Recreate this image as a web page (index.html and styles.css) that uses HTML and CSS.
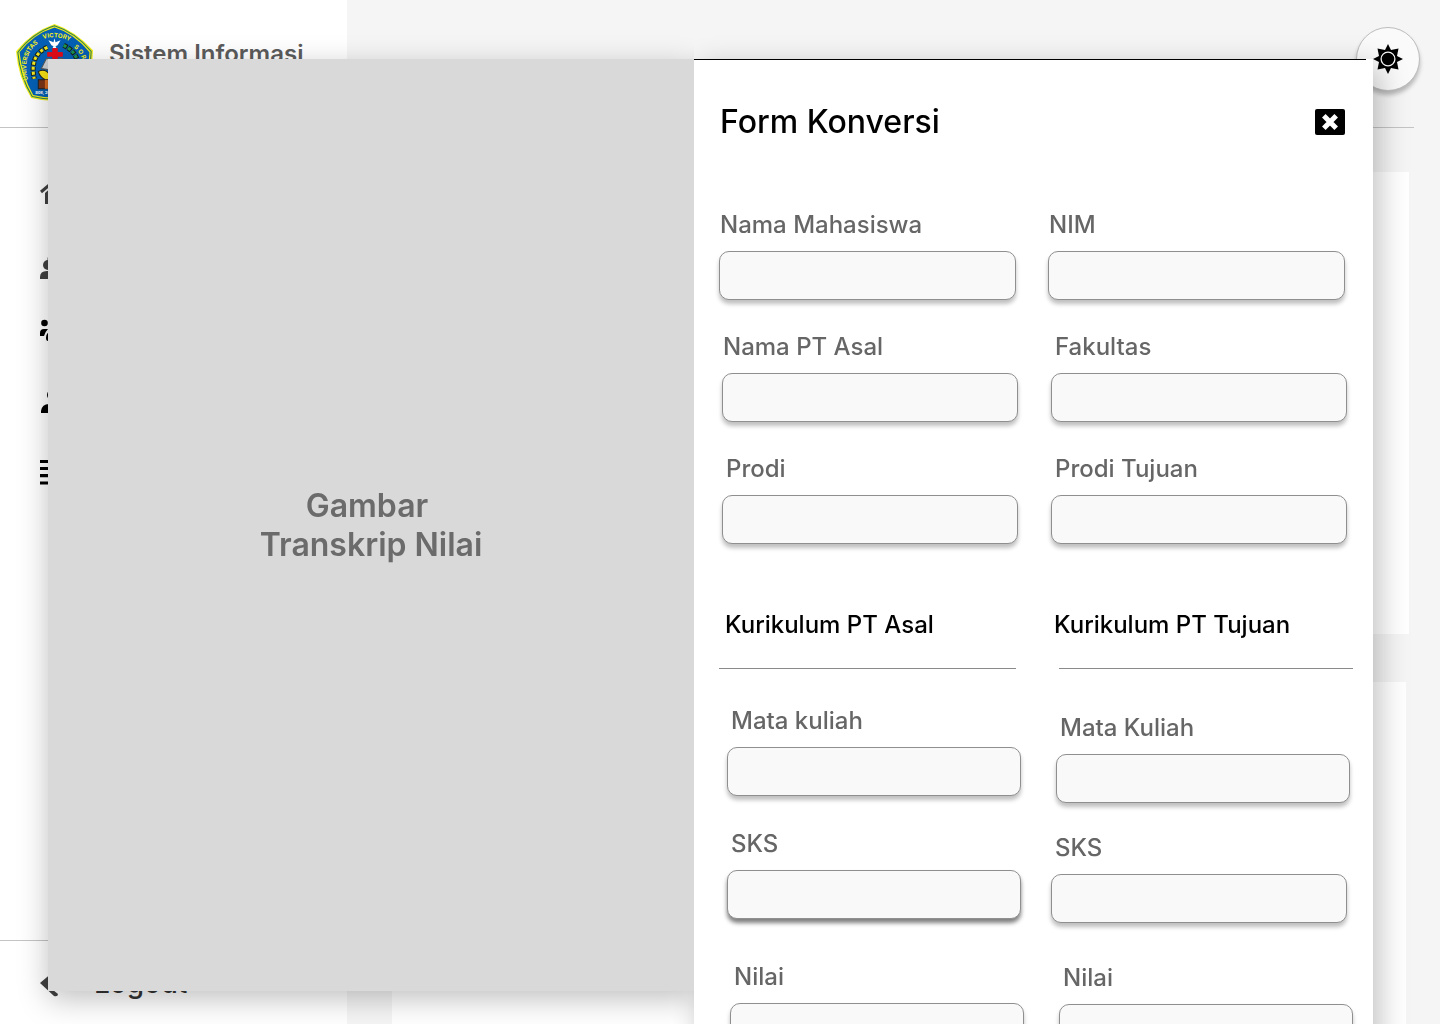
FILE: index.html
```html
<!DOCTYPE html>
<html lang="id">
<head>
<meta charset="utf-8">
<meta name="viewport" content="width=device-width, initial-scale=1">
<title>Form Konversi</title>
<link rel="stylesheet" href="styles.css">
</head>
<body>
<div class="app">
  <aside class="sidebar">
    <div class="brand">
      <svg class="logo" viewBox="0 0 76 76" aria-hidden="true">
        <defs>
          <path id="arc-left" d="M12 55 C7 38 12 24 25 17"/>
          <path id="arc-top" d="M27 15 Q39 10 56 18"/>
          <path id="arc-right" d="M57 23 Q64 28 67 40"/>
        </defs>
        <path d="M38 0 Q59 7 76 26 Q76 51 63 73 Q38 79 15 73 Q2 53 0 27 Q15 8 38 0Z" fill="#f4ee1c"/>
        <path d="M38 1.800 Q58 8 74.200 27 Q74 51 62 71.500 Q38 77 16 71.500 Q4 52 1.800 28 Q16 9 38 1.800Z" fill="none" stroke="#2c7d55" stroke-width="1"/>
        <path d="M38 3.500 Q57 9 72.500 28 Q72 50 61 70 Q38 75 17 70 Q6 51 3.500 28 Q17 10 38 3.500Z" fill="#0560b5"/>
        <g class="logo-text">
          <text><textPath href="#arc-left">UNIVERSITAS</textPath></text>
          <text><textPath href="#arc-top">VICTORY</textPath></text>
          <text><textPath href="#arc-right">S O R</textPath></text>
        </g>
        <g fill="none" stroke="#17251c" stroke-width="5" stroke-dasharray="4 1">
          <path d="M31 23 Q13 31 18 54"/>
          <path d="M47 21 Q59 27 61 38"/>
        </g>
        <path d="M31 23 Q13 31 18 54" fill="none" stroke="#f2e51f" stroke-width="3" stroke-dasharray="3 2"/>
        <path d="M47 21 Q59 27 61 38" fill="none" stroke="#1c9550" stroke-width="3" stroke-dasharray="3 2"/>
        <path d="M38 14l1 4 5-2-3 5-2 1 1 2h-4l1-2-2-1-3-5 5 2Z" fill="#fff"/>
        <path d="M36 24h5v4h5v4h-5v5h-5v-5h-5v-4h5Z" fill="#e00c18"/>
        <path d="M30 34l8 1 8-1 5 10-13 2-13-2Z" fill="#c9cdd0" stroke="#555"/>
        <path d="M36 24h5v4h5v4h-5v3h-5v-3h-5v-4h5Z" fill="#e00c18"/>
        <path d="M22 47q7-4 12 4l15-3v7H29q-5-2-7-8Z" fill="#f5df15" stroke="#222"/>
        <path d="M22 55h32v9H22Z" fill="#7c3516" stroke="#222"/>
        <path d="M30 55v9" stroke="#d86d23" stroke-width="3"/>
        <text class="logo-motto" x="19" y="69">Soe, 2017</text>
      </svg>
      <span class="brand-name">Sistem Informasi</span>
    </div>
    <nav class="nav" aria-label="Menu utama">
      <a href="#" aria-label="Beranda"><svg viewBox="0 0 40 40"><path d="M1 18L14 7l13 11" fill="none" stroke="#414141" stroke-width="3"/><path d="M5 19l9-8 9 8v11H5Z" fill="#414141"/></svg></a>
      <a href="#" aria-label="Pengguna"><svg viewBox="0 0 40 40" fill="#414141"><circle cx="8" cy="21" r="5"/><circle cx="12" cy="15" r="4.500"/><path d="M0 35v-2q0-6 7-6h9v8Z"/></svg></a>
      <a href="#" aria-label="Kelompok"><svg viewBox="0 0 40 40"><circle cx="4.500" cy="9" r="3.300"/><path d="M0 22v-3q0-4 4-4h4q-3 3-4 7Z"/><path d="M6 24q0-6 5-6h6v9H8q-2 0-2-3Z"/><circle cx="14" cy="12" r="4"/></svg></a>
      <a href="#" aria-label="Profil"><svg viewBox="0 0 40 40"><circle cx="13" cy="11" r="6"/><path d="M1 29v-2q1-7 8-7h8q8 0 8 7v2Z"/></svg></a>
      <a href="#" aria-label="Daftar"><svg viewBox="0 0 40 40"><path d="M0 7.500h26M0 14.500h26M0 21.700h26M0 29h26" stroke="#000" stroke-width="3.200"/></svg></a>
    </nav>
    <a class="logout" href="#">
      <svg viewBox="0 0 30 30" aria-hidden="true"><path d="M0 15L13 4v18l5 4q0 3-4 2Z" fill="#414141"/></svg>
      Logout
    </a>
  </aside>
  <main class="content">
    <header class="topbar">
      <button class="theme" type="button" aria-label="Mode terang">
        <svg viewBox="0 0 32 32" aria-hidden="true"><path d="M16 1l3 6 7.500-1.500L25 13l6 3-6 3 1.500 7.500L19 25l-3 6-3-6-7.500 1.500L7 19l-6-3 6-3-1.500-7.500L13 7Z"/><circle cx="16" cy="16" r="6.900" stroke="#fafafa" stroke-width="1.300"/></svg>
      </button>
    </header>
    <div class="cards">
      <section class="card"></section>
      <section class="card card-last"></section>
    </div>
  </main>
</div>

<div class="overlay">
  <div class="modal" role="dialog" aria-labelledby="form-title">
    <section class="preview">
      <p>Gambar&nbsp;<br>Transkrip Nilai</p>
    </section>
    <form class="panel">
      <header class="panel-head">
        <h1 id="form-title">Form Konversi</h1>
        <button class="close" type="button" aria-label="Tutup">
          <svg viewBox="0 0 16 16" aria-hidden="true"><path d="M2.500 2.500l11 11M13.500 2.500l-11 11" stroke="#fff" stroke-width="4.500"/></svg>
        </button>
      </header>
      <div class="columns">
        <div class="fields">
          <div class="field flush"><label for="nama">Nama Mahasiswa</label><input id="nama" type="text"></div>
          <div class="field step-1 flush"><label for="pt">Nama PT Asal</label><input id="pt" type="text"></div>
          <div class="field step-1"><label for="prodi">Prodi</label><input id="prodi" type="text"></div>
        </div>
        <div class="fields">
          <div class="field flush"><label for="nim">NIM</label><input id="nim" type="text"></div>
          <div class="field step-1"><label for="fakultas">Fakultas</label><input id="fakultas" type="text"></div>
          <div class="field step-1"><label for="tujuan">Prodi Tujuan</label><input id="tujuan" type="text"></div>
        </div>
      </div>
      <div class="columns curriculum">
        <section>
          <h2>Kurikulum PT Asal</h2>
          <hr>
          <div class="fields origin">
            <div class="field step-2"><label for="mk-asal">Mata kuliah</label><input id="mk-asal" type="text"></div>
            <div class="field step-2"><label for="sks-asal">SKS</label><input class="raised" id="sks-asal" type="text"></div>
            <div class="field step-3 grade"><label for="nilai-asal">Nilai</label><input id="nilai-asal" type="text"></div>
          </div>
        </section>
        <section>
          <h2>Kurikulum PT Tujuan</h2>
          <hr class="step-3">
          <div class="fields target">
            <div class="field step-2"><label for="mk-tujuan">Mata Kuliah</label><input id="mk-tujuan" type="text"></div>
            <div class="field step-1"><label for="sks-tujuan">SKS</label><input id="sks-tujuan" type="text"></div>
            <div class="field step-3 grade"><label for="nilai-tujuan">Nilai</label><input id="nilai-tujuan" type="text"></div>
          </div>
        </section>
      </div>
    </form>
  </div>
</div>
</body>
</html>
```
FILE: styles.css
```css
* {
  box-sizing: border-box;
}

body {
  margin: 0;
  font-family: Inter, "Liberation Sans", sans-serif;
  font-size: 24px;
  line-height: 30px;
  background: #f5f5f5;
}

h1,
h2,
p,
hr {
  margin: 0;
}

svg {
  display: block;
  flex: none;
}

button {
  padding: 0;
  display: grid;
  place-items: center;
  cursor: pointer;
}

.app {
  display: flex;
  height: 100vh;
  overflow: hidden;
}

/* Sidebar */

.sidebar {
  display: flex;
  flex-direction: column;
  flex: none;
  width: 347px;
  background: #fff;
}

.brand {
  display: flex;
  gap: 16px;
  height: 128px;
  padding: 24px 16px;
  border-bottom: 1px solid #c4c4c4;
}

.logo {
  width: 77px;
  height: 77px;
}

.logo-text {
  font-size: 6px;
  font-weight: 700;
  fill: #f4ee1c;
}

.logo-motto {
  font-size: 4px;
  font-weight: 700;
  fill: #fff;
}

.brand-name {
  padding-top: 15px;
  font-weight: 600;
  color: #5c5c5c;
}

.nav {
  display: flex;
  flex-direction: column;
  flex: 1;
  gap: 30px;
  padding: 46px 40px;
}

.nav svg {
  width: 40px;
  height: 40px;
}

.logout {
  display: flex;
  align-items: center;
  gap: 24px;
  height: 84px;
  padding: 0 40px;
  border-top: 1px solid #c4c4c4;
  font-size: 28px;
  font-weight: 500;
  color: #333;
  text-decoration: none;
}

.logout svg {
  width: 30px;
  height: 30px;
}

/* Page behind the dialog */

.content {
  flex: 1;
}

.topbar {
  display: flex;
  justify-content: flex-end;
  height: 128px;
  margin: 0 26px 0 45px;
  padding-top: 27px;
  border-bottom: 1px solid #c4c4c4;
}

.theme {
  width: 64px;
  height: 64px;
  margin-right: -6px;
  border: 1px solid #bdbdbd;
  border-radius: 50%;
  background: #fafafa;
  box-shadow: 0 4px 4px rgba(0, 0, 0, 0.25);
}

.theme svg {
  width: 32px;
  height: 32px;
}

.cards {
  display: grid;
  gap: 48px;
  padding: 44px 31px 0 45px;
}

.card {
  height: 462px;
  background: #fff;
}

.card-last {
  margin-right: 3px;
}

/* Dialog */

.overlay {
  position: fixed;
  inset: 0;
  overflow-y: auto;
  scrollbar-width: none;
  padding: 59px 67px 0 48px;
}

.modal {
  display: grid;
  grid-template-columns: 646fr 679fr;
  align-items: start;
}

.preview {
  z-index: 2;
  display: grid;
  place-items: center;
  height: calc(100vh - 92px);
  background: #d9d9d9;
  box-shadow: 0 8px 28px rgba(0, 0, 0, 0.25);
  clip-path: inset(-60px 0 -60px -60px);
  font-size: 32px;
  font-weight: 600;
  line-height: 39px;
  color: #6b6b6b;
  text-align: center;
}

.panel {
  z-index: 1;
  padding-bottom: 48px;
  background: #fff;
  box-shadow: 6px 8px 28px rgba(0, 0, 0, 0.25);
}

.panel::before {
  content: "";
  display: block;
  height: 1px;
  margin-right: 7px;
  background: #000;
}

.panel-head {
  display: flex;
  justify-content: space-between;
  align-items: center;
  padding: 42px 28px 0 26px;
}

.panel-head h1 {
  font-size: 32px;
  font-weight: 500;
  line-height: 40px;
}

.close {
  width: 30px;
  height: 26px;
  border: 0;
  border-radius: 2px;
  background: #000;
}

.close svg {
  width: 18px;
  height: 18px;
}

.columns {
  display: grid;
  grid-template-columns: 1fr 1fr;
  gap: 32px;
  padding: 68px 28px 0 25px;
}

.fields {
  display: flex;
  flex-direction: column;
  gap: 32px;
}

.field {
  display: flex;
  flex-direction: column;
  gap: 11px;
}

.field label {
  padding-left: 4px;
  font-weight: 500;
  color: #666;
}

.flush label {
  padding-left: 1px;
}

.field input {
  width: 100%;
  height: 49px;
  padding: 0 12px;
  border: 1px solid #8f8f8f;
  border-radius: 10px;
  background: #f9f9f9;
  box-shadow: 0 4px 4px rgba(0, 0, 0, 0.25);
  font: inherit;
}

.field .raised {
  box-shadow: 0 4px 4px rgba(0, 0, 0, 0.5);
}

.step-1 {
  margin: 0 -2px 0 3px;
}

.step-2 {
  margin: 0 -5px 0 8px;
}

.step-3 {
  margin: 0 -8px 0 11px;
}

.curriculum {
  padding-top: 66px;
}

.curriculum h2 {
  padding-left: 6px;
  font-size: 24px;
  font-weight: 500;
  white-space: nowrap;
}

.curriculum hr {
  margin-top: 28px;
  border: 0;
  border-top: 1px solid #8a8a8a;
}

.origin {
  gap: 33px;
  padding-top: 37px;
}

.target {
  gap: 30px;
  padding-top: 44px;
}

.fields .grade {
  margin-top: 10px;
}
```
